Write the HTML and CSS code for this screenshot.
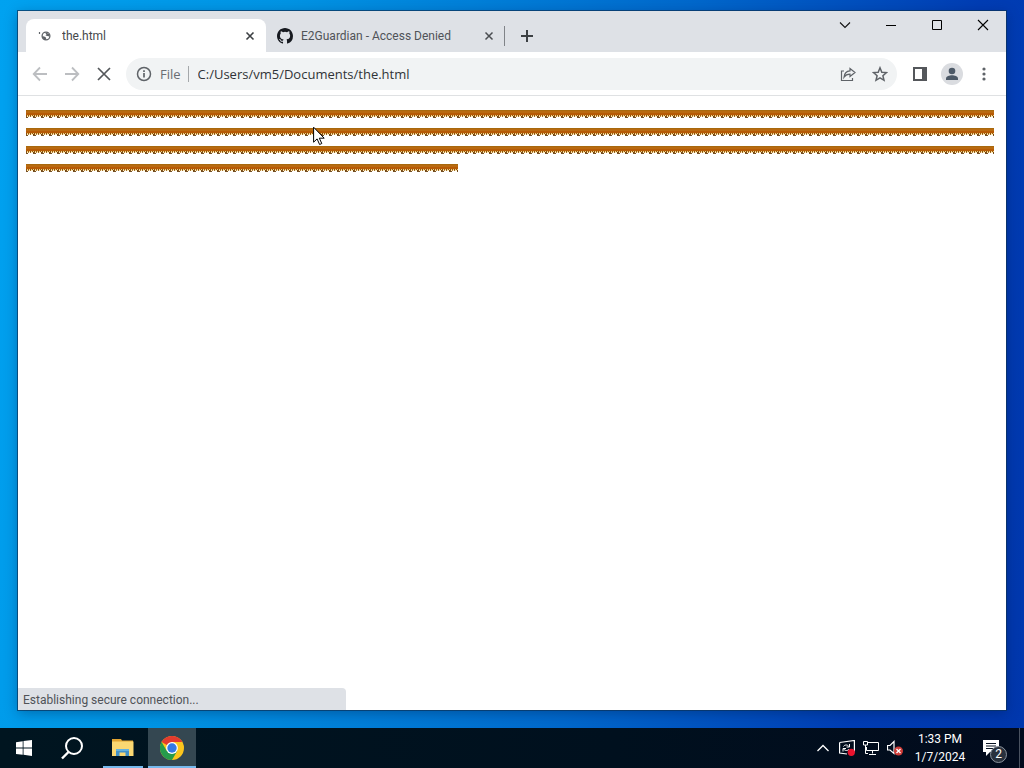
FILE: index.html
```html
<!DOCTYPE html>
<html lang="en">
<head>
<meta charset="utf-8">
<meta name="viewport" content="width=device-width, initial-scale=1">
<title>the.html</title>
<link rel="stylesheet" href="styles.css">
</head>
<body>
<main class="desktop">
  <section class="window">
    <header class="tabstrip">
      <div class="tab tab-active">
        <svg class="favicon" viewBox="0 0 16 16"><path d="M1.500 4v2" stroke="#5f6368" stroke-width="1.200"/><circle cx="8" cy="8" r="3.900" fill="none" stroke="#5f6368" stroke-width="1.300"/><path d="M4.500 8l3 1 1 2.500-2 .5-2-2zM8 4.500l3 1.500.5 2.500-2-.5-2-.5 1-1-1-1z" fill="#5f6368"/></svg>
        <span class="tab-title">the.html</span>
        <button class="tab-close" aria-label="Close tab"><svg viewBox="0 0 16 16"><path d="M4.500 4.500l7 7m0-7l-7 7" stroke="#3c4043" stroke-width="1.600"/></svg></button>
      </div>
      <div class="tab">
        <svg class="favicon" viewBox="0 0 16 16"><path fill="#171a20" d="M8 0C3.580 0 0 3.580 0 8c0 3.540 2.290 6.530 5.470 7.590.4.070.55-.17.55-.38v-1.490c-2.010.37-2.530-.49-2.690-.94-.09-.23-.48-.94-.82-1.130-.28-.15-.68-.52-.01-.53.63-.01 1.080.58 1.230.82.72 1.210 1.870.87 2.330.66.070-.52.28-.87.510-1.070-1.780-.2-3.640-.89-3.640-3.950 0-.87.310-1.590.820-2.150-.08-.2-.36-1.020.080-2.120 0 0 .67-.21 2.200.82a7.420 7.420 0 0 1 4 0c1.530-1.040 2.200-.82 2.200-.82.44 1.100.16 1.920.080 2.120.51.56.820 1.270.820 2.150 0 3.070-1.870 3.750-3.650 3.950.29.25.540.730.540 1.480v2.200c0 .21.150.46.550.38A8 8 0 0 0 16 8c0-4.420-3.580-8-8-8z"/></svg>
        <span class="tab-title">E2Guardian - Access Denied</span>
        <button class="tab-close" aria-label="Close tab"><svg viewBox="0 0 16 16"><path d="M4.500 4.500l7 7m0-7l-7 7" stroke="#4a4d51" stroke-width="1.500"/></svg></button>
      </div>
      <button class="new-tab" aria-label="New tab"><svg viewBox="0 0 16 16"><path d="M8 2v12M2 8h12" stroke="#3c4043" stroke-width="2"/></svg></button>
      <div class="window-controls">
        <button aria-label="Search tabs"><svg viewBox="0 0 16 16"><path d="M3 5.500l5 5 5-5" fill="none" stroke="#111" stroke-width="1.100"/></svg></button>
        <button aria-label="Minimize"><svg viewBox="0 0 16 16"><path d="M3 8.500h10" stroke="#000"/></svg></button>
        <button aria-label="Maximize"><svg viewBox="0 0 16 16"><path d="M3.500 3.500h9v9h-9z" fill="none" stroke="#000"/></svg></button>
        <button aria-label="Close"><svg viewBox="0 0 16 16"><path d="M3 3l10 10m0-10L3 13" stroke="#000" stroke-width="1.100"/></svg></button>
      </div>
    </header>
    <nav class="toolbar">
      <button class="tool" aria-label="Back"><svg viewBox="0 0 16 16"><path d="M15 8H2M8 1.500L1.700 8 8 14.500" fill="none" stroke="#bcbec1" stroke-width="1.800"/></svg></button>
      <button class="tool" aria-label="Forward"><svg viewBox="0 0 16 16"><path d="M1 8h13M8 1.500L14.300 8 8 14.500" fill="none" stroke="#bcbec1" stroke-width="1.800"/></svg></button>
      <button class="tool" aria-label="Stop loading"><svg viewBox="0 0 16 16"><path d="M2 2l12 12m0-12L2 14" stroke="#54575b" stroke-width="1.700"/></svg></button>
      <div class="omnibox">
        <button class="site-info" aria-label="View site information"><svg viewBox="0 0 16 16"><circle cx="8" cy="8" r="6.500" fill="none" stroke="#5f6368" stroke-width="1.500"/><path d="M8 7v4.500M8 4.300v1.700" stroke="#5f6368" stroke-width="1.700"/></svg></button>
        <label class="scheme" for="url">File</label>
        <input class="url" id="url" type="text" value="C:/Users/vm5/Documents/the.html">
        <button class="tool" aria-label="Share"><svg viewBox="0 0 16 16"><path d="M4 5H1.500v9.500h11V12M10 2.500L15 6.500l-5 4V8.200c-3 0-4.500.8-6 3 .3-3.500 2-6 6-6.300z" fill="none" stroke="#5f6368" stroke-width="1.200"/></svg></button>
        <button class="tool" aria-label="Bookmark this page"><svg viewBox="0 0 16 16"><path d="M8 1.800l1.800 4.400 4.700.4-3.600 3.100 1.100 4.600L8 11.900l-4 2.400 1.100-4.600-3.600-3.100 4.700-.4z" fill="none" stroke="#5f6368" stroke-width="1.500"/></svg></button>
      </div>
      <button class="tool" aria-label="Side panel"><svg viewBox="0 0 16 16"><path d="M1 1h14v14H1zM3 3v10h7V3z" fill="#54575b" fill-rule="evenodd"/><path d="M10 1h5v14h-5z" fill="#54575b"/></svg></button>
      <button class="tool avatar" aria-label="Profile"><svg viewBox="0 0 24 24"><circle cx="12" cy="12" r="11" fill="#dadce0"/><circle cx="12" cy="9" r="3.300" fill="#4d5967"/><path d="M6 18v-1.500c0-2 3.500-3.200 6-3.200s6 1.200 6 3.200V18z" fill="#4d5967"/></svg></button>
      <button class="tool" aria-label="Menu"><svg viewBox="0 0 16 16" fill="#5f6368"><circle cx="8" cy="3" r="1.600"/><circle cx="8" cy="8" r="1.600"/><circle cx="8" cy="13" r="1.600"/></svg></button>
    </nav>
    <article class="page">
      <div class="strips">
        <div class="strip"></div>
        <div class="strip"></div>
        <div class="strip"></div>
        <div class="strip strip-last"></div>
      </div>
      <div class="status">Establishing secure connection...</div>
    </article>
  </section>
</main>
<footer class="taskbar">
  <button class="task task-start" aria-label="Start"><svg viewBox="0 0 16 16" fill="#fff"><path d="M0 2.200l6.700-1v6.400H0zM7.500 1L16 0v7.600H7.500zM0 8.400h6.700v6.400L0 13.900zM7.500 8.400H16V16l-8.500-1.200z"/></svg></button>
  <button class="task task-search" aria-label="Search"><svg viewBox="0 0 24 24"><circle cx="14" cy="10" r="8" fill="none" stroke="#fff" stroke-width="2"/><path d="M8.500 16L2 22.500" stroke="#fff" stroke-width="2.400"/></svg></button>
  <button class="task task-files" aria-label="File Explorer"><svg viewBox="0 0 24 24"><path d="M1 3h9l1 1.500h11V8H1z" fill="#e2a431"/><path d="M1 5.500h21.500V20H1z" fill="#fbd872"/><path d="M5 20v-7h13v7h-3.500v-3.500h-6V20z" fill="#4292c9"/><path d="M5 13h13v2H5z" fill="#65b2de"/></svg></button>
  <button class="task task-chrome" aria-label="Google Chrome"><svg viewBox="0 0 24 24"><circle cx="12" cy="12" r="12" fill="#fbc51d"/><path d="M12 12L1.600 6A12 12 0 0 1 22.400 6H12z" fill="#e33b2e"/><path d="M1.600 6A12 12 0 0 0 12 24l5.200-9L12 12l-5.200 3z" fill="#269b4b"/><circle cx="12" cy="12" r="5.900" fill="#fff"/><circle cx="12" cy="12" r="4.700" fill="#3379e5"/></svg></button>
  <div class="tray">
    <button aria-label="Show hidden icons"><svg viewBox="0 0 16 16"><path d="M2.500 11L8 5.500l5.500 5.500" fill="none" stroke="#fff" stroke-width="1.300"/></svg></button>
    <button aria-label="Updates"><svg viewBox="0 0 16 16"><path d="M.6 2.500l14.800-2v11M8 14L.6 13V2.500" fill="none" stroke="#fff" stroke-width="1.200"/><path d="M4.500 6.500c1-2 4-2 5.500 0M10.500 4v3h-3M10 9c-1 2-4 2-5.500 0M4 11.500v-3h3" fill="none" stroke="#fff"/><circle cx="12.300" cy="12.300" r="3.600" fill="#e9132e"/></svg></button>
    <button aria-label="Network"><svg viewBox="0 0 16 16" fill="none" stroke="#fff"><path d="M5 2.500h10.500v8h-12V7M9.500 10.500v3M6 14.500h7M.5 1.500h4V5h-4zM2.500 5v8.500H5"/></svg></button>
    <button aria-label="Volume muted"><svg viewBox="0 0 16 16"><path d="M.5 5.500H3l4-4v12l-4-3.500H.5z" fill="none" stroke="#fff" stroke-width="1.200"/><circle cx="11.500" cy="11" r="4.500" fill="#cf3c38"/><path d="M9.500 9l4 4m0-4l-4 4" stroke="#fff" stroke-width="1.300"/></svg></button>
    <div class="clock"><time>1:33 PM</time><time>1/7/2024</time></div>
    <button class="notifications" aria-label="2 notifications"><svg viewBox="0 0 18 18"><path d="M1 1h16v12h-9l-4 4v-4H1z" fill="#fff"/><path d="M4 4.500h10M4 7h10M4 9.500h7" stroke="#081323"/></svg><span class="badge">2</span></button>
    <button class="show-desktop" aria-label="Show desktop"></button>
  </div>
</footer>
<svg class="cursor" viewBox="0 0 12 20"><path d="M.6 1.200v15l3.500-3.300 2.500 5.600 2.200-1-2.500-5.300h4.900z" fill="#fff" stroke="#000"/></svg>
</body>
</html>
```
FILE: styles.css
```css
* {
  box-sizing: border-box;
}

body {
  margin: 0;
  min-height: 100vh;
  display: flex;
  flex-direction: column;
  font-family: Roboto, "Open Sans", sans-serif;
  font-size: 12px;
  color: #3c4043;
}

button {
  border: 0;
  padding: 0;
  background: none;
  font: inherit;
  color: inherit;
  display: flex;
  align-items: center;
  justify-content: center;
}

svg {
  width: 16px;
  height: 16px;
  display: block;
  flex: none;
}

.desktop {
  flex: 1;
  display: flex;
  padding: 11px 18px 18px;
  background: linear-gradient(100deg, #00a2f0 0%, #0094e4 25%, #0068cc 60%, #003db4 85%, #0037ad 100%);
}

.window {
  flex: 1;
  min-width: 0;
  display: flex;
  flex-direction: column;
  background: #fff;
  box-shadow: 0 0 0 1px rgba(10, 50, 90, 0.7), 0 3px 12px rgba(0, 20, 60, 0.35);
}

.tabstrip {
  display: flex;
  align-items: flex-end;
  height: 41px;
  padding-left: 8px;
  background: #dee1e6;
}

.tab {
  flex: 0 1 239px;
  min-width: 0;
  height: 33px;
  display: flex;
  align-items: center;
  gap: 8px;
  padding: 0 8px 0 11px;
  color: #505358;
}

.tab-active {
  flex-basis: 240px;
  padding-left: 12px;
  background: #fff;
  border-radius: 8px 8px 0 0;
  color: #45484c;
}

.tab-title {
  flex: 1;
  overflow: hidden;
  white-space: nowrap;
}

.tab + .tab {
  position: relative;
}

.tab + .tab::after {
  content: "";
  position: absolute;
  right: 0;
  top: 7px;
  height: 20px;
  border-right: 1px solid #808388;
}

.new-tab {
  width: 44px;
  height: 33px;
}

.window-controls {
  display: flex;
  align-self: flex-start;
  margin-left: auto;
}

.window-controls button {
  width: 46px;
  height: 28px;
}

.toolbar {
  display: flex;
  align-items: center;
  height: 44px;
  padding: 0 6px;
  border-bottom: 1px solid #dfe1e3;
}

.tool {
  width: 32px;
  height: 32px;
  flex: none;
}

.avatar svg {
  width: 24px;
  height: 24px;
}

.omnibox {
  flex: 1;
  min-width: 0;
  display: flex;
  align-items: center;
  height: 32px;
  margin: 0 7px 0 6px;
  padding: 0 1px 0 10px;
  border-radius: 16px;
  background: #f1f3f4;
  font-family: "Open Sans", "Noto Sans", sans-serif;
  font-size: 13px;
}

.scheme {
  margin-left: 8px;
  padding-right: 7px;
  border-right: 1px solid #a5a8ab;
  line-height: 16px;
  color: #6a6d72;
}

.url {
  flex: 1;
  min-width: 0;
  padding: 0 9px;
  border: 0;
  background: none;
  font: inherit;
  color: #303337;
}

.page {
  flex: 1;
  display: flex;
  flex-direction: column;
  justify-content: space-between;
}

.strips {
  display: grid;
  gap: 10px;
  padding: 14px 12px 0 8px;
}

.strip {
  height: 8px;
  background:
    linear-gradient(90deg, #735024 2px, transparent 2px 7px, #735024 7px) 0 7px / 8px 1px repeat-x,
    linear-gradient(90deg, #855222 1px, #ffedb4 1px 2px, #b98543 2px 3px, #fff4d2 3px 4px, #a06a28 4px 5px, #fff0c0 5px 7px, #70420f 7px) 0 6px / 8px 1px repeat-x,
    linear-gradient(90deg, #8a4c08 1px, #f2cf80 1px 2px, #9a5709 2px 3px, #f2cf80 3px 4px, #8a4c08 4px 5px, #f2cf80 5px 6px, #9a5709 6px 7px, #f2cf80 7px) 0 5px / 8px 1px repeat-x,
    linear-gradient(#a8690d 1px, #b96a10 1px 3px, #b75b05 3px) 0 0 / 100% 5px no-repeat;
}

.strip-last {
  max-width: 432px;
}

.status {
  width: 328px;
  height: 22px;
  padding-left: 5px;
  border-radius: 0 4px 0 0;
  background: #dee1e6;
  line-height: 24px;
  color: #505358;
}

.taskbar {
  display: flex;
  height: 40px;
  background: linear-gradient(90deg, #001520, #00101e 60%, #020b1d);
  color: #fff;
}

.task {
  width: 48px;
}

.task-search svg,
.task-files svg,
.task-chrome svg {
  width: 24px;
  height: 24px;
}

.task-files {
  width: 40px;
  margin: 0 5px 0 7px;
  border-bottom: 2px solid #76b9ed;
}

.task-chrome {
  background: #344751;
  border-bottom: 2px solid #76b9ed;
}

.task-files,
.task-chrome {
  padding-top: 2px;
}

.tray {
  display: flex;
  margin-left: auto;
}

.tray button {
  width: 24px;
}

.clock {
  display: flex;
  flex-direction: column;
  justify-content: center;
  width: 66px;
  line-height: 18px;
  text-align: center;
}

.tray .notifications {
  position: relative;
  width: 46px;
  padding-right: 10px;
}

.notifications svg {
  width: 18px;
  height: 18px;
}

.badge {
  position: absolute;
  left: 17px;
  top: 18px;
  width: 17px;
  height: 17px;
  border: 1px solid #8b939d;
  border-radius: 50%;
  background: #29313d;
  line-height: 15px;
  text-align: center;
}

.tray .show-desktop {
  width: 5px;
  border-left: 1px solid #4a5260;
}

.cursor {
  position: absolute;
  left: 313px;
  top: 126px;
  width: 12px;
  height: 20px;
}
```
